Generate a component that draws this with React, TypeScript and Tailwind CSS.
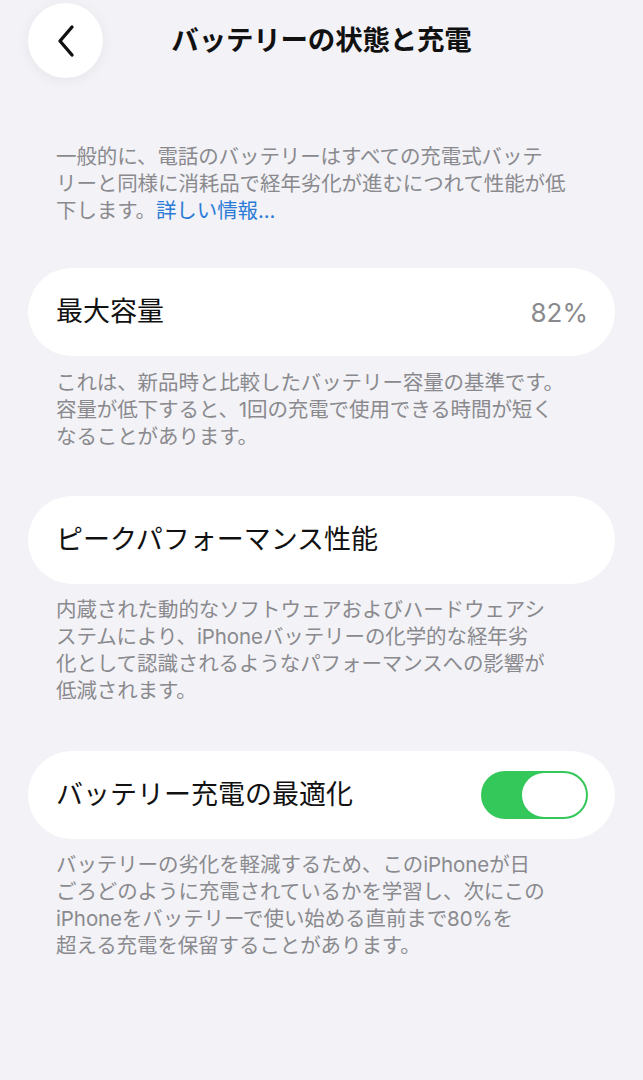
import React from "react";

const font = { fontFamily: '"Inter", "Noto Sans CJK JP", sans-serif' };

function Card({ children }: { children: React.ReactNode }) {
  return (
    <div className="mx-[28px] h-[88px] rounded-full bg-white flex items-center justify-between pl-[28px] pr-[27px]">
      {children}
    </div>
  );
}

function Note({ lines, className = "" }: { lines: React.ReactNode[]; className?: string }) {
  return (
    <p className={`px-[56px] text-[20.5px] leading-[27px] text-[#8a8a8e] tracking-[-0.1px] ${className}`}>
      {lines.map((l, i) => (
        <span key={i} className="block whitespace-nowrap">
          {l}
        </span>
      ))}
    </p>
  );
}

export default function App() {
  return (
    <div className="w-[643px] h-[1080px] bg-[#f2f2f7] overflow-hidden" style={font}>
      {/* header */}
      <header className="grid grid-cols-[1fr_auto_1fr] items-center pt-[3px]">
        <div className="pl-[28px]">
          <button className="w-[75px] h-[75px] rounded-full bg-white shadow-[0_2px_14px_rgba(0,0,0,0.06)] flex items-center justify-center">
            <svg width="22" height="34" viewBox="0 0 22 34" fill="none">
              <path d="M17 3 L5 17 L17 31" stroke="#111" strokeWidth="3.4" strokeLinecap="round" strokeLinejoin="round" />
            </svg>
          </button>
        </div>
        <h1 className="text-[27.5px] font-bold text-[#111] tracking-[-0.2px]">バッテリーの状態と充電</h1>
        <div />
      </header>

      <Note
        className="mt-[65px] text-[#7d7d82]"
        lines={[
          "一般的に、電話のバッテリーはすべての充電式バッテ",
          "リーと同様に消耗品で経年劣化が進むにつれて性能が低",
          <>
            下します。<span className="text-[#2a7bd6]">詳しい情報...</span>
          </>,
        ]}
      />

      <div className="mt-[44px]">
        <Card>
          <span className="text-[27px] text-[#111]">最大容量</span>
          <span className="text-[26px] text-[#8a8a8e]">82%</span>
        </Card>
      </div>
      <Note
        className="mt-[13px]"
        lines={[
          "これは、新品時と比較したバッテリー容量の基準です。",
          "容量が低下すると、1回の充電で使用できる時間が短く",
          "なることがあります。",
        ]}
      />

      <div className="mt-[46px]">
        <Card>
          <span className="text-[27px] text-[#111]">ピークパフォーマンス性能</span>
        </Card>
      </div>
      <Note
        className="mt-[12px]"
        lines={[
          "内蔵された動的なソフトウェアおよびハードウェアシ",
          "ステムにより、iPhoneバッテリーの化学的な経年劣",
          "化として認識されるようなパフォーマンスへの影響が",
          "低減されます。",
        ]}
      />

      <div className="mt-[47px]">
        <Card>
          <span className="text-[27px] text-[#111]">バッテリー充電の最適化</span>
          <div className="w-[107px] h-[48px] rounded-full bg-[#34c759] p-[2px] flex justify-end">
            <div className="w-[64px] h-[44px] rounded-full bg-white" />
          </div>
        </Card>
      </div>
      <Note
        className="mt-[12px]"
        lines={[
          "バッテリーの劣化を軽減するため、このiPhoneが日",
          "ごろどのように充電されているかを学習し、次にこの",
          "iPhoneをバッテリーで使い始める直前まで80%を",
          "超える充電を保留することがあります。",
        ]}
      />
    </div>
  );
}
